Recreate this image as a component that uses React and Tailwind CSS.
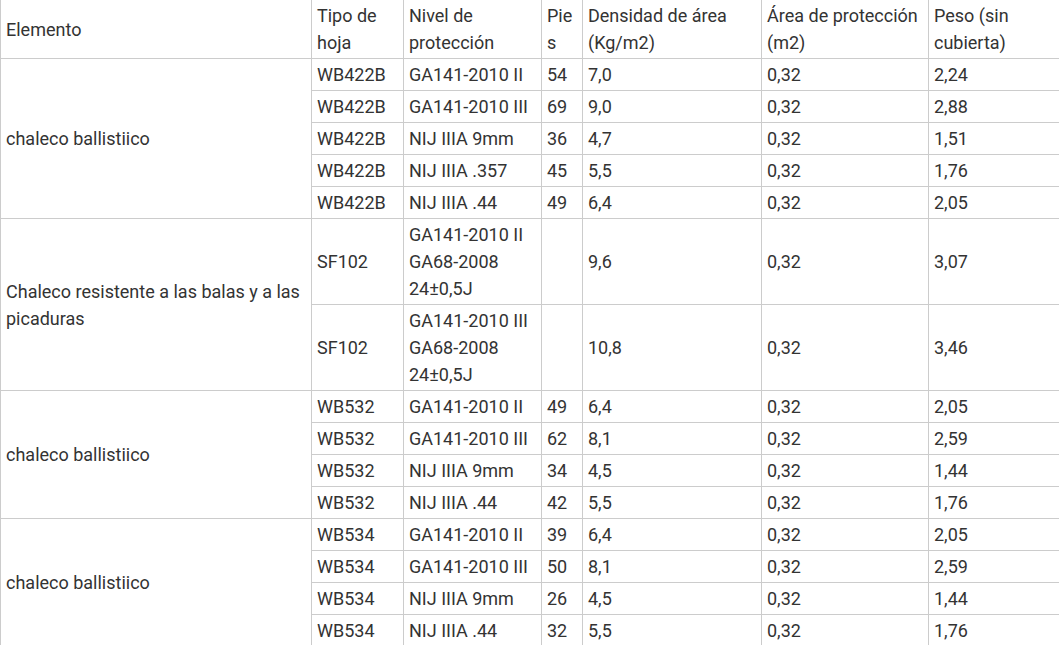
const groups = [
  {
    name: 'chaleco ballistiico',
    rows: [
      ['WB422B', ['GA141-2010 II'], '54', '7,0', '0,32', '2,24'],
      ['WB422B', ['GA141-2010 III'], '69', '9,0', '0,32', '2,88'],
      ['WB422B', ['NIJ IIIA 9mm'], '36', '4,7', '0,32', '1,51'],
      ['WB422B', ['NIJ IIIA .357'], '45', '5,5', '0,32', '1,76'],
      ['WB422B', ['NIJ IIIA .44'], '49', '6,4', '0,32', '2,05'],
    ],
  },
  {
    name: 'Chaleco resistente a las balas y a las picaduras',
    rows: [
      ['SF102', ['GA141-2010 II', 'GA68-2008', '24±0,5J'], '', '9,6', '0,32', '3,07'],
      ['SF102', ['GA141-2010 III', 'GA68-2008', '24±0,5J'], '', '10,8', '0,32', '3,46'],
    ],
  },
  {
    name: 'chaleco ballistiico',
    rows: [
      ['WB532', ['GA141-2010 II'], '49', '6,4', '0,32', '2,05'],
      ['WB532', ['GA141-2010 III'], '62', '8,1', '0,32', '2,59'],
      ['WB532', ['NIJ IIIA 9mm'], '34', '4,5', '0,32', '1,44'],
      ['WB532', ['NIJ IIIA .44'], '42', '5,5', '0,32', '1,76'],
    ],
  },
  {
    name: 'chaleco ballistiico',
    rows: [
      ['WB534', ['GA141-2010 II'], '39', '6,4', '0,32', '2,05'],
      ['WB534', ['GA141-2010 III'], '50', '8,1', '0,32', '2,59'],
      ['WB534', ['NIJ IIIA 9mm'], '26', '4,5', '0,32', '1,44'],
      ['WB534', ['NIJ IIIA .44'], '32', '5,5', '0,32', '1,76'],
    ],
  },
];

const headers = [
  'Elemento',
  'Tipo de hoja',
  'Nivel de protección',
  'Pies',
  'Densidad de área (Kg/m2)',
  'Área de protección (m2)',
  'Peso (sin cubierta)',
];

const cell = 'border border-[#cccccc] px-[5px] py-[2px] align-middle text-left font-normal break-words';

export default function App() {
  return (
    <div className="w-[1059px] h-[645px] overflow-hidden bg-white">
      <table
        className="-mt-px w-[1060px] table-fixed border-collapse text-[18px] leading-[27px] text-[#333333]"
        style={{ fontFamily: 'Roboto, "Noto Sans", sans-serif' }}
      >
        <colgroup>
          <col className="w-[311px]" />
          <col className="w-[92px]" />
          <col className="w-[138px]" />
          <col className="w-[41px]" />
          <col className="w-[179px]" />
          <col className="w-[167px]" />
          <col className="w-[132px]" />
        </colgroup>
        <thead>
          <tr>
            {headers.map((h) => (
              <th key={h} className={cell}>{h}</th>
            ))}
          </tr>
        </thead>
        <tbody>
          {groups.map((g, gi) =>
            g.rows.map((r, ri) => (
              <tr key={`${gi}-${ri}`}>
                {ri === 0 && (
                  <td rowSpan={g.rows.length} className={cell}>{g.name}</td>
                )}
                <td className={cell}>{r[0]}</td>
                <td className={cell}>
                  {r[1].map((line, li) => (
                    <div key={li}>{line}</div>
                  ))}
                </td>
                <td className={cell}>{r[2]}</td>
                <td className={cell}>{r[3]}</td>
                <td className={cell}>{r[4]}</td>
                <td className={cell}>{r[5]}</td>
              </tr>
            ))
          )}
        </tbody>
      </table>
    </div>
  );
}
